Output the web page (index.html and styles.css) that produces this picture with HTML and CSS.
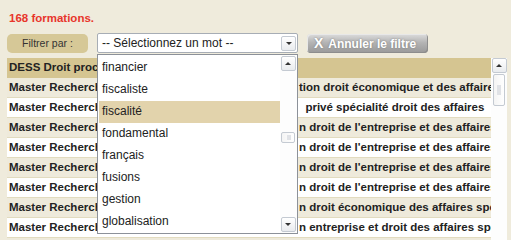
FILE: index.html
```html
<!DOCTYPE html>
<html lang="fr">
<head>
    <meta charset="UTF-8">
    <title>Formations</title>
    <link rel="stylesheet" href="styles.css">
</head>
<body>
    <div class="page">
        <div class="count">168 formations.</div>

        <div class="filters">
            <div class="filter-label">Filtrer par :</div>
            <div class="select">
                <span class="select-text">-- Sélectionnez un mot --</span>
                <span class="sb-btn"><span class="arrow-down"></span></span>
            </div>
            <button class="reset-btn"><span class="reset-x">X</span> Annuler le filtre</button>
        </div>

        <div class="results">
            <div class="table">
                <div class="row head">
                    <div class="cell title">DESS Droit procédure collective</div>
                    <div class="cell detail"></div>
                </div>
                <div class="row odd">
                    <div class="cell title">Master Recherche Droit</div>
                    <div class="cell detail">tion droit économique et des affaires spécialité</div>
                </div>
                <div class="row">
                    <div class="cell title">Master Recherche Droit</div>
                    <div class="cell detail">&nbsp; privé spécialité droit des affaires</div>
                </div>
                <div class="row odd">
                    <div class="cell title">Master Recherche Droit</div>
                    <div class="cell detail">n droit de l'entreprise et des affaires</div>
                </div>
                <div class="row">
                    <div class="cell title">Master Recherche Droit</div>
                    <div class="cell detail">n droit de l'entreprise et des affaires</div>
                </div>
                <div class="row odd">
                    <div class="cell title">Master Recherche Droit</div>
                    <div class="cell detail">n droit de l'entreprise et des affaires</div>
                </div>
                <div class="row">
                    <div class="cell title">Master Recherche Droit</div>
                    <div class="cell detail">n droit de l'entreprise et des affaires</div>
                </div>
                <div class="row odd">
                    <div class="cell title">Master Recherche Droit</div>
                    <div class="cell detail">n droit économique des affaires spécialité</div>
                </div>
                <div class="row">
                    <div class="cell title">Master Recherche Droit</div>
                    <div class="cell detail">n entreprise et droit des affaires spécialité</div>
                </div>
                <div class="row odd">
                    <div class="cell title">Master Recherche Droit</div>
                    <div class="cell detail">n droit des affaires</div>
                </div>
            </div>
            <div class="vscroll">
                <span class="sb-btn"><span class="arrow-up"></span></span>
                <span class="sb-thumb big"></span>
            </div>

            <!-- liste ouverte du select -->
            <div class="dropdown">
                <ul class="options">
                    <li>financier</li>
                    <li>fiscaliste</li>
                    <li class="active">fiscalité</li>
                    <li>fondamental</li>
                    <li>français</li>
                    <li>fusions</li>
                    <li>gestion</li>
                    <li>globalisation</li>
                </ul>
                <div class="vscroll list-scroll">
                    <span class="sb-btn"><span class="arrow-up"></span></span>
                    <span class="sb-track"><span class="sb-thumb small"></span></span>
                    <span class="sb-btn"><span class="arrow-down"></span></span>
                </div>
            </div>
        </div>
    </div>
</body>
</html>
```

FILE: styles.css
```css
body {
    margin: 0;
    background-color: #efebdc;
    font-family: "Liberation Sans", Arial, sans-serif;
    color: #222;
}

.page {
    padding: 11px 4px 0 7px;
}

.count {
    color: #e8352b;
    font-weight: bold;
    font-size: 11.5px;
    line-height: 14px;
    margin: 0 0 8px 2px;
}

.filters {
    display: flex;
    align-items: center;
    height: 20px;
}

.filter-label {
    width: 81px;
    height: 19px;
    background-color: #d6c897;
    border-radius: 5px;
    font-size: 10.5px;
    color: #333;
    display: flex;
    align-items: center;
    justify-content: center;
}

.select {
    margin-left: 9px;
    width: 199px;
    height: 18px;
    border: 1px solid #a7adb5;
    border-radius: 2px;
    background-color: #fff;
    display: flex;
    align-items: center;
}

.select-text {
    flex: 1;
    font-size: 12px;
    padding-left: 4px;
}

.select .sb-btn {
    margin-right: 1px;
}

.reset-btn {
    margin-left: 9px;
    width: 121px;
    height: 19px;
    border: none;
    border-radius: 4px;
    background: linear-gradient(#dcdcdc, #b4b4b4 45%, #999 100%);
    box-shadow: inset -1px -1px 0 #8d8d8d, inset 1px 1px 0 #e8e8e8;
    color: #fff;
    font-family: "Liberation Sans", Arial, sans-serif;
    font-weight: bold;
    font-size: 12px;
    text-shadow: 0 0 2px #777;
    padding: 0 0 0 7px;
    text-align: left;
}

.reset-x {
    font-size: 14px;
    margin-right: 2px;
}

.results {
    position: relative;
    margin-top: 5px;
    display: flex;
}

.table {
    width: 484px;
    height: 182px;
    overflow: hidden;
}

.row {
    display: flex;
    height: 19px;
    border-bottom: 1px solid #e2dbbf;
    background-color: #fff;
    font-weight: bold;
    font-size: 11.5px;
    line-height: 19px;
}

.row.odd {
    background-color: #eeeadb;
}

.row.head {
    background-color: #d5c591;
    border-bottom-color: #d5c591;
}

.cell {
    white-space: nowrap;
    overflow: hidden;
}

.title {
    width: 287px;
    padding-left: 2px;
}

.detail {
    flex: 1;
    padding-left: 3px;
}

/* barres de defilement style XP */
.vscroll {
    width: 16px;
    display: flex;
    flex-direction: column;
    align-items: center;
    background-color: #fdfdfd;
}

.sb-btn {
    width: 15px;
    height: 15px;
    box-sizing: border-box;
    border: 1px solid #c4cad2;
    border-radius: 2px;
    background: linear-gradient(#fff, #e9ebee);
    display: flex;
    align-items: center;
    justify-content: center;
}

.arrow-up, .arrow-down {
    width: 0;
    height: 0;
    border-left: 3px solid transparent;
    border-right: 3px solid transparent;
}

.arrow-up {
    border-bottom: 3px solid #333;
}

.arrow-down {
    border-top: 3px solid #333;
}

.sb-thumb {
    display: block;
    box-sizing: border-box;
    border: 1px solid #c4cad2;
    border-radius: 2px;
    background: linear-gradient(90deg, #f4f4f4, #fff);
}

.sb-thumb.big {
    width: 12px;
    height: 32px;
    margin-top: 1px;
    position: relative;
}

.sb-thumb.big::after,
.sb-thumb.small::after {
    content: "";
    position: absolute;
    left: 3px;
    top: 10px;
    width: 4px;
    height: 10px;
    background-color: #e0e2e6;
}

.dropdown {
    position: absolute;
    left: 90px;
    top: -4px;
    width: 199px;
    height: 178px;
    border: 1px solid #8c9199;
    background-color: #fff;
    display: flex;
}

.options {
    flex: 1;
    list-style: none;
    margin: 0;
    padding: 2px 0 0 1px;
    font-size: 12px;
}

.options li {
    height: 22px;
    line-height: 21px;
    padding-left: 3px;
}

.options li.active {
    background-color: #e2d3ac;
}

.list-scroll {
    padding: 1px 1px 1px 0;
}

.sb-track {
    flex: 1;
    width: 15px;
    position: relative;
}

.sb-thumb.small {
    position: absolute;
    left: 0;
    top: 61px;
    width: 14px;
    height: 11px;
}

.sb-thumb.small::after {
    top: 2px;
    left: 5px;
    height: 5px;
}
```
